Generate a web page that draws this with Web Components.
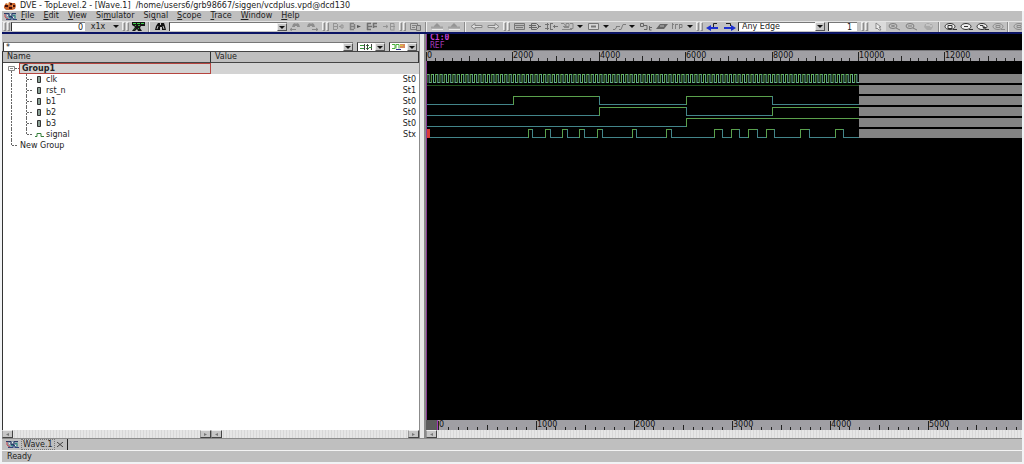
<!DOCTYPE html>
<html lang="en">
<head>
<meta charset="utf-8">
<title>DVE - TopLevel.2</title>
<style>
html,body{margin:0;background:#fff}
body{font:8px/11px "DejaVu Sans",sans-serif;color:#222}
</style>
</head>
<body>
<dve-window></dve-window>
<script>
const base = `*{box-sizing:border-box}
button,input,select{font:inherit;color:inherit;margin:0;padding:0;border:0;border-radius:0;background:none;min-width:0;outline:0}
svg{display:block}`;
function define(name, css, html, setup) {
  customElements.define(name, class extends HTMLElement {
    constructor() {
      super();
      this.attachShadow({mode: 'open'});
    }
    connectedCallback() {
      const body = typeof html === 'function' ? html(this) : html;
      this.shadowRoot.innerHTML = `<style>${base}${css}</style>${body}`;
      if (setup) setup(this, this.shadowRoot);
    }
  });
}

const icons = {
  app: '<path d="M1 5l2-3 2 1 1-2 3 1 3 0 1 3-1 3-3 1-3 0-3 0-2-2z" fill="#c9642c"/><path d="M2 5h3M7 3h2M6 7h3M10 5h2" stroke="#40100c" stroke-width="2"/><path d="M4 3h2M9 5h1" stroke="#ffd58a"/>',
  waves: '<path d="M1 1h11v7H2z" fill="#8fa3b0"/><path d="M0 1.500h5v3h3v-3h4" stroke="#2b3a68" fill="none"/><path d="M2 7.500h5v-2h2v2h4" stroke="#31427c" fill="none"/><path d="M1 2v3l3 2" stroke="#c4454f" fill="none"/><path d="M5 5.500h2M9 3.500h2v3" stroke="#2f8a80" fill="none"/><path d="M6 2.500h1M3 3.500h1M9 5.500h1" stroke="#eee"/>',
  addwave: '<path d="M0 0h13v4H9L8 6l2 3H6L5 7 3 9H0l3-4-3-2" fill="#151515"/><path d="M1 1.500h3M5 1.500h3M9 1.500h3" stroke="#3fd04a"/><path d="M3 3.500h1M6 3.500h2M2 7.500l1-1M7 7l-1-1" stroke="#37b23c"/>',
  find: '<path d="M1 8l1-4 2-3h2v2h1V1h3l1 3 1 4H8V5H6v3z" fill="#111"/><path d="M3 7l1-3M9 4l1 3" stroke="#ddd" stroke-width=".8"/>',
  findprev: '<path d="M3 5l1-3 2-1 1 1 1-1 2 1 1 3H8V4H6v1z" fill="#8d8d8d"/><path d="M7 7.500H1M3 6L1 7.500 3 9" stroke="#888" fill="none"/>',
  findnext: '<path d="M1 5l1-3 2-1 1 1 1-1 2 1 1 3H6V4H4v1z" fill="#8d8d8d"/><path d="M6 7.500h6M10 6l2 1.500L10 9" stroke="#888" fill="none"/>',
  sig1: '<path d="M1.500 1v7M1 1.500h4M1 4.500h5M1 7.500h4M5.500 2v5M7 4.500h2M9 3h2v3H9z" stroke="#949494" fill="none"/>',
  sig2: '<path d="M1.500 1v7M1 1.500h4M1 4.500h5M1 7.500h4M5.500 2v5" stroke="#808080" fill="none" stroke-width="1.500"/><path d="M8 3l4 1.500L8 6z" fill="#555"/>',
  sig3: '<path d="M1.500 1v7M1 1.500h4M1 4.500h5M1 7.500h4M7.500 1v5M7 1.500h4M7 4.500h4" stroke="#707070" fill="none" stroke-width="1.500"/>',
  sig4: '<path d="M0 4.500h5M3 3l2 1.500L3 6M7.500 1v7h4M7 1.500h4v6M7 4.500h5" stroke="#949494" fill="none"/>',
  doc: '<path d="M1.500 1.500h7v6h-7zM3 3.500h4M3 5.500h3" stroke="#808080" fill="none"/><path d="M7.500 3.500h4v5h-4z" fill="#b5b5b5" stroke="#777"/>',
  up: '<path d="M3 4l3-3 3 3v2H3z" fill="#949494"/><path d="M0 5.500h12" stroke="#a1a1a1" stroke-width="2"/><path d="M1 7.500h11" stroke="#e8e8e8"/>',
  back: '<path d="M1 4.500L5 1.500v2h7v2H5v2z" fill="#ddd" stroke="#858585"/>',
  fwd: '<path d="M12 4.500L8 1.500v2H1v2h7v2z" fill="#ddd" stroke="#858585"/>',
  list: '<path d="M1.500 1.500h10v6h-10zM2 3.500h9M3 5.500h7" stroke="#777" fill="#bbb"/>',
  gate: '<path d="M2.500 1.500h5l3 3-3 3h-5zM0 3.500h7M0 5.500h8M9 4.500h3" stroke="#666" fill="none"/>',
  tree: '<path d="M0 2.500h4M0 6.500h4M2.500 1v7M5.500 1v7M6 1.500h2M6 7.500h2M8 4.500h5M9.500 3v3" stroke="#727272" fill="none"/>',
  bus: '<path d="M0 1.500h3l2 3H2M5 1.500h3v3H5zM9 1.500h3v5H9M1 7.500h10M3 5.500h5" stroke="#888" fill="none"/>',
  box: '<path d="M1.500 1.500h10v6h-10z" stroke="#777" fill="#d5d5d5"/><path d="M4 4.500h5" stroke="#777" stroke-width="2"/>',
  slope: '<path d="M0 7.500h2l2-3h3M6 7.500h2l2-5h3M3 4.500h2" stroke="#7d7d7d" fill="none"/>',
  schem: '<path d="M1.500 1.500h3v3h-3zM5 3.500h3v4H5M10.500 4v4h2M10 5.500h3" stroke="#666" fill="none"/>',
  erase: '<path d="M1 7l4-5h8L9 7z" fill="#666"/><path d="M5 4h4" stroke="#bbb"/>',
  path: '<path d="M1.500 1v6M1 2.500h2M4.500 2v5M5 2.500h2M8.500 2v5M8 2.500h3v3H9" stroke="#808080" fill="none"/>',
  prevedge: '<path d="M0 6L5 3v2h7v2H5v2z" fill="#1c2fd0"/><path d="M7.500 5V1.500H11" stroke="#222" fill="none"/>',
  nextedge: '<path d="M13 6L8 3v2H1v2h7v2z" fill="#1c2fd0"/><path d="M3 1.500h4.500V4" stroke="#222" fill="none"/>',
  pointer: '<path d="M5 1l5 4H8l2 3H8L6 6 5 7z" fill="#eee" stroke="#777" stroke-width=".8"/>',
  zin: '<ellipse cx="5" cy="4" rx="4" ry="2.500" stroke="#7d7d7d" fill="none"/><path d="M8 6l4 2M3 4h4M5 3v2" stroke="#7d7d7d"/>',
  zout: '<ellipse cx="5" cy="4" rx="4" ry="2.500" stroke="#7d7d7d" fill="none"/><path d="M8 6l4 2M3 4h4" stroke="#7d7d7d"/>',
  hand: '<path d="M2 5l1-3h1l1-1 2 0 1 1h2l1 3-2 3H5z" fill="#aaa"/><path d="M5 2v2M7 2v2M9 3v2" stroke="#ddd"/>',
  zfull: '<ellipse cx="6" cy="4.500" rx="5" ry="3" stroke="#333" fill="#eee"/><path d="M4 3.500h4v3H4zM9 7.500h4" stroke="#333" fill="none"/>',
  zsel: '<ellipse cx="6" cy="4.500" rx="5" ry="3" stroke="#333" fill="#eee"/><path d="M4 4.500h4M9 7.500h4" stroke="#333" fill="none"/>',
  zcur: '<ellipse cx="6" cy="4.500" rx="5" ry="3" stroke="#333" fill="#eee"/><path d="M4 3.500h3v2h3M8 4v3M9 7.500h4" stroke="#333" fill="none"/>',
  zoff: '<ellipse cx="6" cy="4.500" rx="5" ry="3" stroke="#8a8a8a" fill="none"/><path d="M4 3.500h4v2H4zM9 7.500h4" stroke="#8a8a8a" fill="none"/>',
  radixa: '<path d="M0 2.500h4M0 5.500h4M6 2.500h3M6 5.500h3" stroke="#37943b" fill="none"/><path d="M4.500 1v6M7.500 1v6M11.500 1v6" stroke="#444"/><path d="M9 4.500h3" stroke="#37943b"/>',
  radixb: '<path d="M0 1.500h3v4H0M4 5.500V1.500h3v4" stroke="#4bb13d" fill="none"/><path d="M8 1h5v4H8z" fill="#d98c60"/><path d="M4 6.500h5" stroke="#2b2b99"/><path d="M8 2.500h3" stroke="#d8c944"/>'
};
define('dve-icon', ':host{display:block;width:13px;height:9px;flex:none}',
  e => `<svg width="13" height="9" viewBox="0 0 13 9" aria-hidden="true">${icons[e.getAttribute('name')]}</svg>`);

define('tool-button', `:host{display:block;width:17px;flex:none}
:host([dense]){width:16px}
button{display:flex;width:100%;height:9px;align-items:center;justify-content:center}
:host([pressed]) button{background:#dadada}`,
  e => `<button type="button" aria-label="${e.getAttribute('name')}"><dve-icon name="${e.getAttribute('name')}"></dve-icon></button>`);

define('drop-arrow', `:host{display:block;width:10px;height:9px;flex:none}
:host([raised]){background:#c6c6c6;border:1px solid;border-color:#eee #555 #555 #eee}
button{display:flex;width:100%;height:100%;align-items:center;justify-content:center}`,
  '<button type="button" aria-label="Open list"><svg width="6" height="3"><path d="M0 0h6L3 3z" fill="#111"/></svg></button>');

define('tool-grip', `:host{display:flex;width:9px;height:9px;justify-content:center;gap:1px;flex:none}
i{width:3px;border:1px solid;border-color:#eee #8c8c8c #8c8c8c #eee}`, '<i></i><i></i>');
define('tool-sep', ':host{display:block;width:5px;height:10px;flex:none;padding:0 1px}i{display:block;width:2px;height:100%;border-left:1px solid #8c8c8c;border-right:1px solid #eee}', '<i></i>');

define('menu-bar', `:host{display:flex;height:10px;align-items:center;background:#bfbfbf;padding-left:2px}
nav{display:flex;gap:1px}
button{padding:0 4px;height:10px;line-height:10px}
u{text-underline-offset:1px}`,
`<dve-icon name="waves"></dve-icon><nav>${['_File','_Edit','_View','Si_mulator','Si_gnal','_Scope','_Trace','_Window','_Help']
  .map(t => `<button type="button">${t.replace(/_(.)/, '<u>$1</u>')}</button>`).join('')}</nav>`);

const B = (names, a = '') => names.split(' ').map(n => `<tool-button name="${n}" ${a}></tool-button>`).join('');
define('tool-bar', `:host{display:flex;height:11px;align-items:flex-start;background:#c2c2c2;border-top:1px solid #e4e4e4;overflow:hidden}
input,.field,select{height:9px;line-height:8px;background:#fff;border-left:1px solid #333;border-top:1px solid #777;flex:none}
.time{width:74px;text-align:right;padding-right:2px}
.speed{width:26px;text-align:center;flex:none;line-height:9px}
.field{display:flex;width:118px}
.field input{border:0;flex:1;height:8px}
.field drop-arrow{height:8px}
select{width:77px;appearance:none;padding-left:3px;border-right:0}
.count{width:29px;margin:0 3px;text-align:right;padding-right:5px}`,
`<tool-grip></tool-grip><input class="time" aria-label="Time" value="0"><button type="button" class="speed">x1x</button><drop-arrow></drop-arrow>
<tool-grip></tool-grip>${B('addwave')}<tool-sep></tool-sep>${B('find')}
<span class="field"><input aria-label="Find"><drop-arrow raised></drop-arrow></span>
${B('findprev findnext')}<tool-grip></tool-grip>${B('sig1 sig2 sig3 sig4')}<tool-grip></tool-grip>${B('doc')}<tool-sep></tool-sep>
${B('up up')}<tool-sep></tool-sep>${B('back fwd')}<tool-grip></tool-grip>
${B('list gate tree bus','dense')}<drop-arrow></drop-arrow>${B('box','dense')}<drop-arrow></drop-arrow>${B('slope','dense')}<drop-arrow></drop-arrow>
${B('schem erase path','dense')}<drop-arrow></drop-arrow><tool-grip></tool-grip>${B('prevedge nextedge')}
<select aria-label="Edge type"><option>Any Edge</option></select><drop-arrow raised></drop-arrow>
<input class="count" aria-label="Edge count" value="1"><tool-grip></tool-grip>
${B('pointer','pressed')}${B('zin zout hand')}<tool-sep></tool-sep>${B('zfull zsel zcur zoff','dense')}<tool-sep></tool-sep>${B('zoff')}`);

define('scroll-track', `:host{display:flex;justify-content:space-between;height:8px;background:repeating-linear-gradient(90deg,#d8d8d8 0 1px,#e6e6e6 1px 3px)}
button{width:11px;height:8px;background:#c6c6c6;border:1px solid;border-color:#eee #444 #444 #999;display:flex;align-items:center;justify-content:center}`,
e => `<button type="button" aria-label="Scroll left"><svg width="3" height="3"><path d="M3 0v3L0 1.500z" fill="#777"/></svg></button>${e.hasAttribute('open') ? '' :
`<button type="button" aria-label="Scroll right"><svg width="3" height="3"><path d="M0 0v3l3-1.500z" fill="#777"/></svg></button>`}`);

/* Branch lines and the glyph of one row of the signal tree. */
const dots = 'stroke="#666" stroke-dasharray="2 1" fill="none"';
const guide = {
  group: `<svg width="16" height="11"><path d="M8.500 8v3M12 5.500h4" ${dots}/><path d="M5.500 3.500h6v4h-6zM7 5.500h3" stroke="#888" fill="#fff"/></svg>`,
  bit: `<svg width="43" height="11"><path d="M8.500 0v11M23.500 0v11M24 5.500h6" ${dots}/><path d="M34.500 2.500h3v6h-3z" fill="#8aa096" stroke="#333"/></svg>`,
  wave: `<svg width="43" height="11"><path d="M8.500 0v11M23.500 0v6M24 5.500h6" ${dots}/><path d="M32 7.500h2v-3h4v3h3" stroke="#37803b" fill="none"/></svg>`,
  end: `<svg width="17" height="11"><path d="M8.500 0v6M9 5.500h6" ${dots}/></svg>`
};
define('tree-node', `:host{display:flex;height:11px;line-height:11px;white-space:nowrap}
b{flex:1;background:#d3d3d3;border:1px solid #b5453f;line-height:9px;padding-left:2px}
svg{flex:none}`,
e => `${guide[e.getAttribute('kind')]}${e.getAttribute('kind') === 'group' ? '<b><slot></slot></b>' : '<slot></slot>'}`);

define('signal-tree', `:host{display:block;flex:1;background:#fff;border-left:1px solid #333;border-top:1px solid #444}
table{width:100%;border-collapse:separate;border-spacing:0;table-layout:fixed}
td,th{padding:0;height:11px;line-height:11px}
th{line-height:10px;text-align:left;font-weight:normal;background:#bfbfbf;border-right:1px solid #333;border-bottom:1px solid #444;padding-left:4px}
td:last-child{text-align:right;padding-right:3px}
.g td:last-child{background:#d3d3d3}`,
`<table><thead><tr><th>Name</th><th>Value</th></tr></thead><tbody>${
[['group','Group1',''],['bit','clk','St0'],['bit','rst_n','St1'],['bit','b1','St0'],['bit','b2','St0'],['bit','b3','St0'],['wave','signal','Stx'],['end','New Group','']]
.map(([k,n,v]) => `<tr class="${k[0]}"><td><tree-node kind="${k}">${n}</tree-node></td><td>${v}</td></tr>`).join('')}</tbody></table>`);

define('signal-pane', `:host{display:flex;flex-direction:column;min-width:0;background:#bfbfbf}
.filter{display:flex;align-items:center;height:9px;margin:8px 2px 0 1px;gap:4px}
.box{display:flex;height:9px;background:#fff;border-left:1px solid #333;border-top:1px solid #777}
.box drop-arrow{height:8px;margin-left:auto}
.box dve-icon{height:8px;margin:0 2px}
.box:first-child{flex:1}
input{flex:1;padding-left:2px;height:8px}
.bars{display:grid;grid-template-columns:1fr 1fr}`,
`<div class="filter"><div class="box"><input aria-label="Filter" value="*"><drop-arrow raised></drop-arrow></div>
<div class="box"><dve-icon name="radixa"></dve-icon><drop-arrow raised></drop-arrow></div>
<div class="box"><dve-icon name="radixb"></dve-icon><drop-arrow raised></drop-arrow></div></div>
<signal-tree></signal-tree><div class="bars"><scroll-track></scroll-track><scroll-track></scroll-track></div>`);

/* Time ruler: a labelled major tick every ten divisions, a middle tick every five. */
define('time-ruler', ':host{display:block;height:11px;background:#a09fa4;overflow:hidden}svg{width:100%;height:100%}text{font-size:8px;fill:#111}', '<svg></svg>',
(e, root) => {
  const [x0, major, step, n] = ['start','major','step','count'].map(k => +e.getAttribute(k));
  let s = '';
  for (let i = 0; i < n * 10; i++) {
    const x = Math.round(x0 + i * major / 10), y = i % 10 ? (i % 5 ? 7 : 5) : 1;
    s += `<path d="M${x}.5 ${y}v12" stroke="#222"/>`;
    if (i % 10 === 0) s += `<text x="${x + 1}" y="7">${i / 10 * step}</text>`;
  }
  root.querySelector('svg').innerHTML = s;
});

/* One trace; "toggles" lists the positions where the level flips. */
define('wave-trace', ':host{display:block;height:11px}svg{width:100%;height:11px}', '<svg></svg>',
(e, root) => {
  const end = 432, t = (e.getAttribute('toggles') || '').split(' ').filter(Boolean).map(Number);
  const clock = e.hasAttribute('clock');
  if (clock) for (let i = 0; i < 200; i++) t.push(i * 2.16);
  const g = clock ? '#66b558' : '#5aa04c', c = clock ? '#6aaf9c' : '#43858a';
  let high = e.hasAttribute('high'), x = 0, s = '';
  for (const p of [...t, end]) {
    s += `<path d="M${x} ${high ? 1.5 : 9.5}H${p}" stroke="${high ? g : c}"/>`;
    if (p < end) s += `<path d="M${clock ? p : p + 0.5} 1v9" stroke="${high ? c : g}"/>`;
    high = !high; x = p;
  }
  if (e.hasAttribute('high') && !t.length) s = `<path d="M0 1.500H${end}" stroke="#24521f"/>`;
  if (e.hasAttribute('unknown')) s += '<path d="M0 1h3v9H0z" fill="#d93a36"/>';
  s += `<rect x="${end}" y="1" width="100%" height="9" fill="#848484"/>`;
  root.querySelector('svg').innerHTML = s;
});

define('wave-pane', `:host{display:flex;flex-direction:column;min-width:0;overflow:hidden;background:#000}
.marks{height:16px;padding-left:3px;border-left:1px solid #8a3a96;color:#a238b4;font:8px/8px "DejaVu Sans Mono",monospace}
.marks div{height:8px}
.marks b{color:#c542da}
time-ruler.top{border-top:1px solid #77767a}
.waves{flex:1;border-left:1px solid #8a3a96;padding-top:12px}
.foot{display:flex;height:10px}
.foot i{width:12px;background:#5b5b5b;border-right:1px solid #a238b4}
.foot time-ruler{flex:1;height:10px}`,
`<div class="marks"><div><b>C1:0</b></div><div>REF</div></div>
<time-ruler class="top" start="0" major="86.4" step="2000" count="7"></time-ruler>
<div class="waves">
<wave-trace clock></wave-trace><wave-trace high></wave-trace>
<wave-trace toggles="86 172 259 345"></wave-trace><wave-trace toggles="172 259 345"></wave-trace><wave-trace toggles="259"></wave-trace>
<wave-trace unknown toggles="101 105 118 123 135 140 152 157 170 175 205 209 239 244 287 295 304 312 321 330 339 347 373 382 408 416"></wave-trace>
</div>
<div class="foot"><i></i><time-ruler start="0" major="97.9" step="1000" count="6"></time-ruler></div>
<scroll-track open></scroll-track>`);

define('dve-window', `:host{display:flex;flex-direction:column;min-height:100vh;padding:0 2px;background:#f1f3f5}
header{display:flex;align-items:center;gap:4px;height:11px;background:#fff;margin:0 -2px;padding-left:3px}
h1{font:inherit;margin:0;white-space:pre}
main{flex:1;display:grid;grid-template-columns:417px 7px minmax(0,1fr);background:#bfbfbf;border-top:2px solid #0b1464}
.split{border:solid #8b8b8b;border-width:0 2px 0 1px;background:#e8e8e8}
.tabs{height:13px;background:#bfbfbf;border-top:1px solid #8b8b8b;border-bottom:1px solid #f4f4f4;display:flex}
.tab{display:flex;align-items:center;gap:2px;border-right:1px solid #222;padding:0 4px;height:11px}
.tab button{line-height:9px}
.tab .name{border:1px dotted #777;padding:0 1px}
footer{height:11px;line-height:11px;background:#bfbfbf;padding-left:5px;margin-bottom:2px}`,
`<header><dve-icon name="app"></dve-icon><h1>DVE - TopLevel.2 - [Wave.1]  /home/users6/grb98667/siggen/vcdplus.vpd@dcd130</h1></header>
<menu-bar></menu-bar><tool-bar></tool-bar>
<main><signal-pane></signal-pane><div class="split"></div><wave-pane></wave-pane></main>
<div class="tabs"><div class="tab"><dve-icon name="waves"></dve-icon><button type="button" class="name">Wave.1</button><button type="button" aria-label="Close tab"><svg width="6" height="5"><path d="M0 0l6 5M6 0L0 5" stroke="#444"/></svg></button></div></div>
<footer>Ready</footer>`);
</script>
</body>
</html>
